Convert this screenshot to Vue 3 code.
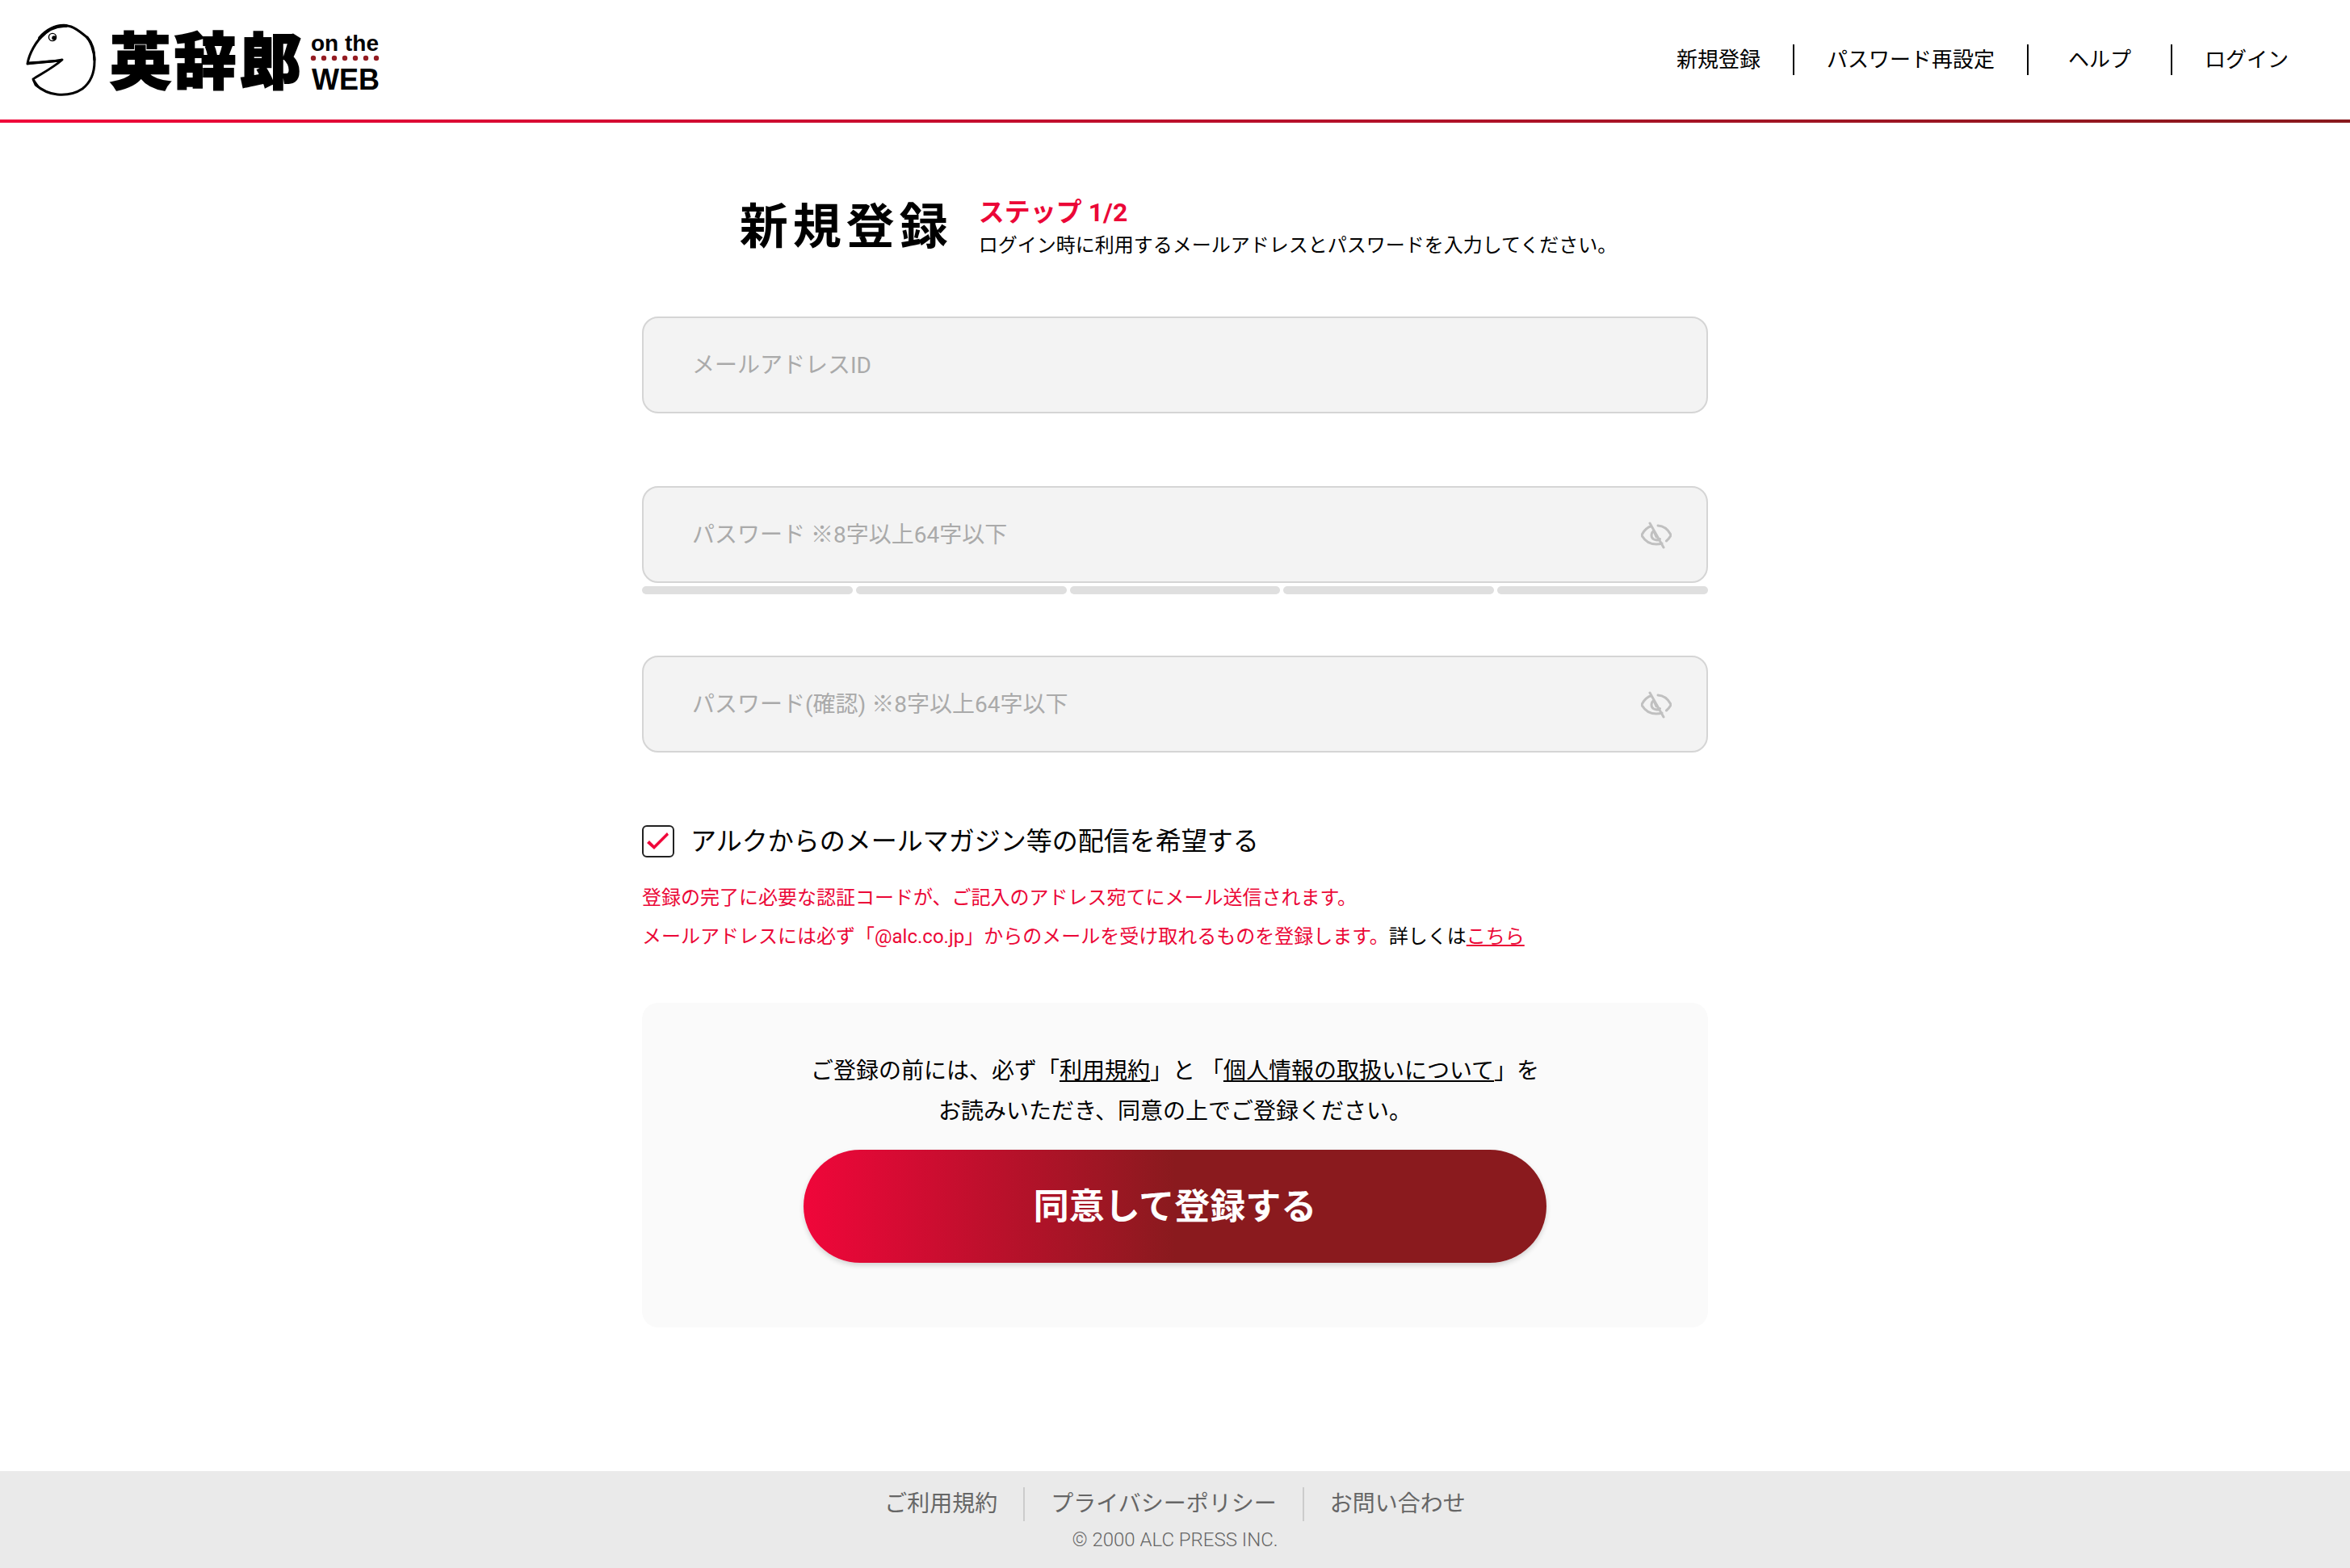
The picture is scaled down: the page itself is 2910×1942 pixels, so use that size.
<script setup>

import { ref } from 'vue'

const menu = ref([
  { id: 1, nome: '新規登録' },
  { id: 2, nome: 'パスワード再設定' },
  { id: 3, nome: 'ヘルプ' },
  { id: 4, nome: 'ログイン' },
])

const rodape = ref([
  { id: 1, nome: 'ご利用規約' },
  { id: 2, nome: 'プライバシーポリシー' },
  { id: 3, nome: 'お問い合わせ' },
])

const email = ref('')
const senhas = ref([
  {
    id: 'password',
    texto: 'パスワード ※8字以上64字以下',
    valor: '',
    visivel: false,
    barras: 5,
  },
  {
    id: 'password-confirm',
    texto: 'パスワード(確認) ※8字以上64字以下',
    valor: '',
    visivel: false,
    barras: 0,
  },
])
const magazine = ref(true)

function alternar(item) {
  item.visivel = !item.visivel
}
</script>

<template>
  <div class="page">
    <header class="header">
      <a class="logo" href="#" aria-label="英辞郎 on the WEB">
        <svg class="logo-svg" viewBox="0 -3 450 96" aria-hidden="true">
          <g fill="none" stroke="#000" stroke-linejoin="round" stroke-linecap="round">
            <path stroke-width="3" d="M2 50C4 38 12 22 24 12C34 3 46 1 56 4C62 6 68 11 73 15C80 20 85 34 85 47C85 62 79 74 70 81C61 87 50 89 39 88C28 87 19 82 12 76L9 69C20 62 35 54 45 45C31 48 18 48 2 50Z" />
            <path stroke-width="4" d="M17 18C27 7 38 2 50 3" />
            <path stroke-width="3" d="M3 49C15 48 32 47 43 46M76 17C83 25 85 36 85 45M10 71L15 78" />
            <circle cx="33" cy="17" r="4.6" stroke-width="1.4" />
          </g>
          <circle cx="35" cy="18" r="2.8" />
          <text class="logo-kanji" x="104 184 265" y="75">英辞郎</text>
          <text class="logo-on" x="353" y="34">on the</text>
          <g fill="#951c22">
            <circle v-for="n in 7" :key="n" :cx="343 + n * 13" cy="43" r="3.2" />
          </g>
          <text class="logo-web" x="354" y="82">WEB</text>
        </svg>
      </a>
      <nav class="nav">
        <a v-for="item in menu" :key="item.id" href="#">{{ item.nome }}</a>
      </nav>
    </header>

    <main class="main">
      <div class="title">
        <h1>新規登録</h1>
        <div>
          <p class="step">ステップ 1/2</p>
          <p class="lead">ログイン時に利用するメールアドレスとパスワードを入力してください。</p>
        </div>
      </div>

      <form class="form" @submit.prevent>
        <div class="field">
          <input id="email" v-model="email" type="email" placeholder="メールアドレスID" aria-label="メールアドレスID">
        </div>

        <div v-for="item in senhas" :key="item.id" class="field">
          <div class="senha">
            <input
              :id="item.id"
              v-model="item.valor"
              :type="item.visivel ? 'text' : 'password'"
              :placeholder="item.texto"
              :aria-label="item.texto"
            >
            <button class="eye" type="button" aria-label="パスワードを表示" @click="alternar(item)">
              <svg viewBox="0 0 38 34">
                <path d="M13 5.500C8 7 4 11 1.500 15.500Q1 17 1.500 18C5 24 11 28 19 28Q23 28 26 27M21 5C28 5.500 33 9 36.500 15.500Q37 17 36.500 18Q34.500 21.500 31.500 24M16 11.500C12 14 12 20 16 22Q20 24 23.500 21.500M16 12L19 19M11 2L28 32" />
              </svg>
            </button>
          </div>
          <div v-if="item.barras" class="barras">
            <span v-for="n in item.barras" :key="n"></span>
          </div>
        </div>

        <label class="check">
          <span class="box">
            <input v-model="magazine" type="checkbox">
            <svg v-if="magazine" viewBox="0 0 40 40"><path d="M6 22L9 19L15 25L31 9L33 12L15 30Z" /></svg>
          </span>
          アルクからのメールマガジン等の配信を希望する
        </label>

        <p class="note">
          登録の完了に必要な認証コードが、ご記入のアドレス宛てにメール送信されます。<br>
          メールアドレスには必ず「@alc.co.jp」からのメールを受け取れるものを登録します。<span>詳しくは</span><a href="#">こちら</a>
        </p>

        <div class="agree">
          <p>
            ご登録の前には、必ず「<a href="#">利用規約</a>」と 「<a href="#">個人情報の取扱いについて</a>」を<br>
            お読みいただき、同意の上でご登録ください。
          </p>
          <button class="submit" type="submit">同意して登録する</button>
        </div>
      </form>
    </main>

    <footer class="footer">
      <nav class="footer-nav">
        <a v-for="item in rodape" :key="item.id" href="#">{{ item.nome }}</a>
      </nav>
      <small>© 2000 ALC PRESS INC.</small>
    </footer>
  </div>
</template>

<style>
body {
  margin: 0;
  background: #fff;
}
</style>

<style scoped>
* {
  box-sizing: border-box;
}
.page {
  display: flex;
  flex-direction: column;
  min-height: 100vh;
  color: #000;
  font-family: Roboto, "Noto Sans CJK JP", sans-serif;
  font-weight: 400;
}
p, h1 {
  margin: 0;
}
a {
  color: inherit;
}
input, button {
  font-family: inherit;
}
.header {
  display: flex;
  justify-content: space-between;
  align-items: center;
  height: 152px;
  padding: 0 36px 0 32px;
  border-bottom: 4px solid;
  border-image: linear-gradient(90deg, #f0063a, #88191d) 1;
}
.logo-svg {
  display: block;
  width: 450px;
  height: 96px;
}
.logo-kanji {
  font-size: 76px;
  font-weight: 900;
  stroke: #000;
  stroke-width: 2px;
}
.logo-on {
  font-family: "Liberation Sans", sans-serif;
  font-size: 28px;
  font-weight: 700;
}
.logo-web {
  font-family: "Liberation Sans", sans-serif;
  font-size: 36px;
  font-weight: 700;
}
.nav {
  display: flex;
}
.nav a {
  min-width: 178px;
  padding: 0 40px;
  font-size: 26px;
  line-height: 38px;
  text-align: center;
  text-decoration: none;
}
.nav a + a {
  border-left: 2px solid #000;
}
.main {
  flex: 1;
  width: 1320px;
  max-width: 100%;
  margin: 0 auto;
}
.title {
  display: flex;
  justify-content: center;
  align-items: center;
  gap: 32px;
  padding: 86px 0 66px 8px;
}
h1 {
  font-size: 60px;
  line-height: 88px;
  font-weight: 700;
  letter-spacing: 6px;
}
.step {
  color: #eb0737;
  font-size: 32px;
  line-height: 44px;
  font-weight: 700;
}
.lead {
  font-size: 24px;
  line-height: 38px;
}
.field {
  height: 210px;
}
.field input {
  display: block;
  width: 100%;
  height: 120px;
  padding: 0 60px;
  border: 2px solid #d5d5d5;
  border-radius: 20px;
  background: #f3f3f3;
  font-size: 28px;
}
.field input::placeholder {
  color: #aaa;
  opacity: 1;
}
.senha {
  position: relative;
}
.eye {
  position: absolute;
  top: 44px;
  right: 45px;
  padding: 0;
  border: 0;
  background: none;
  cursor: pointer;
}
.eye svg {
  display: block;
  width: 38px;
  height: 34px;
  fill: none;
  stroke: #c0c0c0;
  stroke-width: 3px;
  stroke-linecap: round;
}
.barras {
  display: flex;
  gap: 4px;
  margin-top: 4px;
}
.barras span {
  flex: 1;
  height: 10px;
  border-radius: 5px;
  background: #dfdfdf;
}
.check {
  display: flex;
  align-items: center;
  gap: 20px;
  font-size: 32px;
  line-height: 40px;
}
.box {
  display: grid;
}
.box input, .box svg {
  grid-area: 1 / 1;
  width: 40px;
  height: 40px;
  margin: 0;
}
.box input {
  appearance: none;
  border: 2px solid #222;
  border-radius: 6px;
}
.box svg {
  fill: #f0063a;
  pointer-events: none;
}
.note {
  margin-top: 26px;
  color: #eb0737;
  font-size: 24px;
  line-height: 48px;
}
.note span {
  color: #000;
}
.agree {
  display: flex;
  flex-direction: column;
  align-items: center;
  margin-top: 58px;
  padding: 60px 20px 80px;
  border-radius: 20px;
  background: #fafafa;
  font-size: 28px;
  line-height: 50px;
  text-align: center;
}
.submit {
  width: 920px;
  max-width: 100%;
  height: 140px;
  margin-top: 22px;
  padding-bottom: 8px;
  border: 0;
  border-radius: 70px;
  background: linear-gradient(90deg, #f0063a, #8a1a1e 50%);
  box-shadow: 0 3px 6px rgba(0, 0, 0, 0.16);
  color: #fff;
  font-size: 44px;
  font-weight: 700;
}
.footer {
  display: flex;
  flex-direction: column;
  align-items: center;
  height: 120px;
  padding-top: 20px;
  background: #eaeaea;
  color: #666;
}
.footer-nav {
  display: flex;
}
.footer-nav a {
  padding: 0 32px;
  font-size: 28px;
  line-height: 42px;
  text-decoration: none;
}
.footer-nav a + a {
  border-left: 2px solid #ccc;
}
.footer small {
  font-size: 24px;
  line-height: 46px;
  font-weight: 300;
}
</style>
